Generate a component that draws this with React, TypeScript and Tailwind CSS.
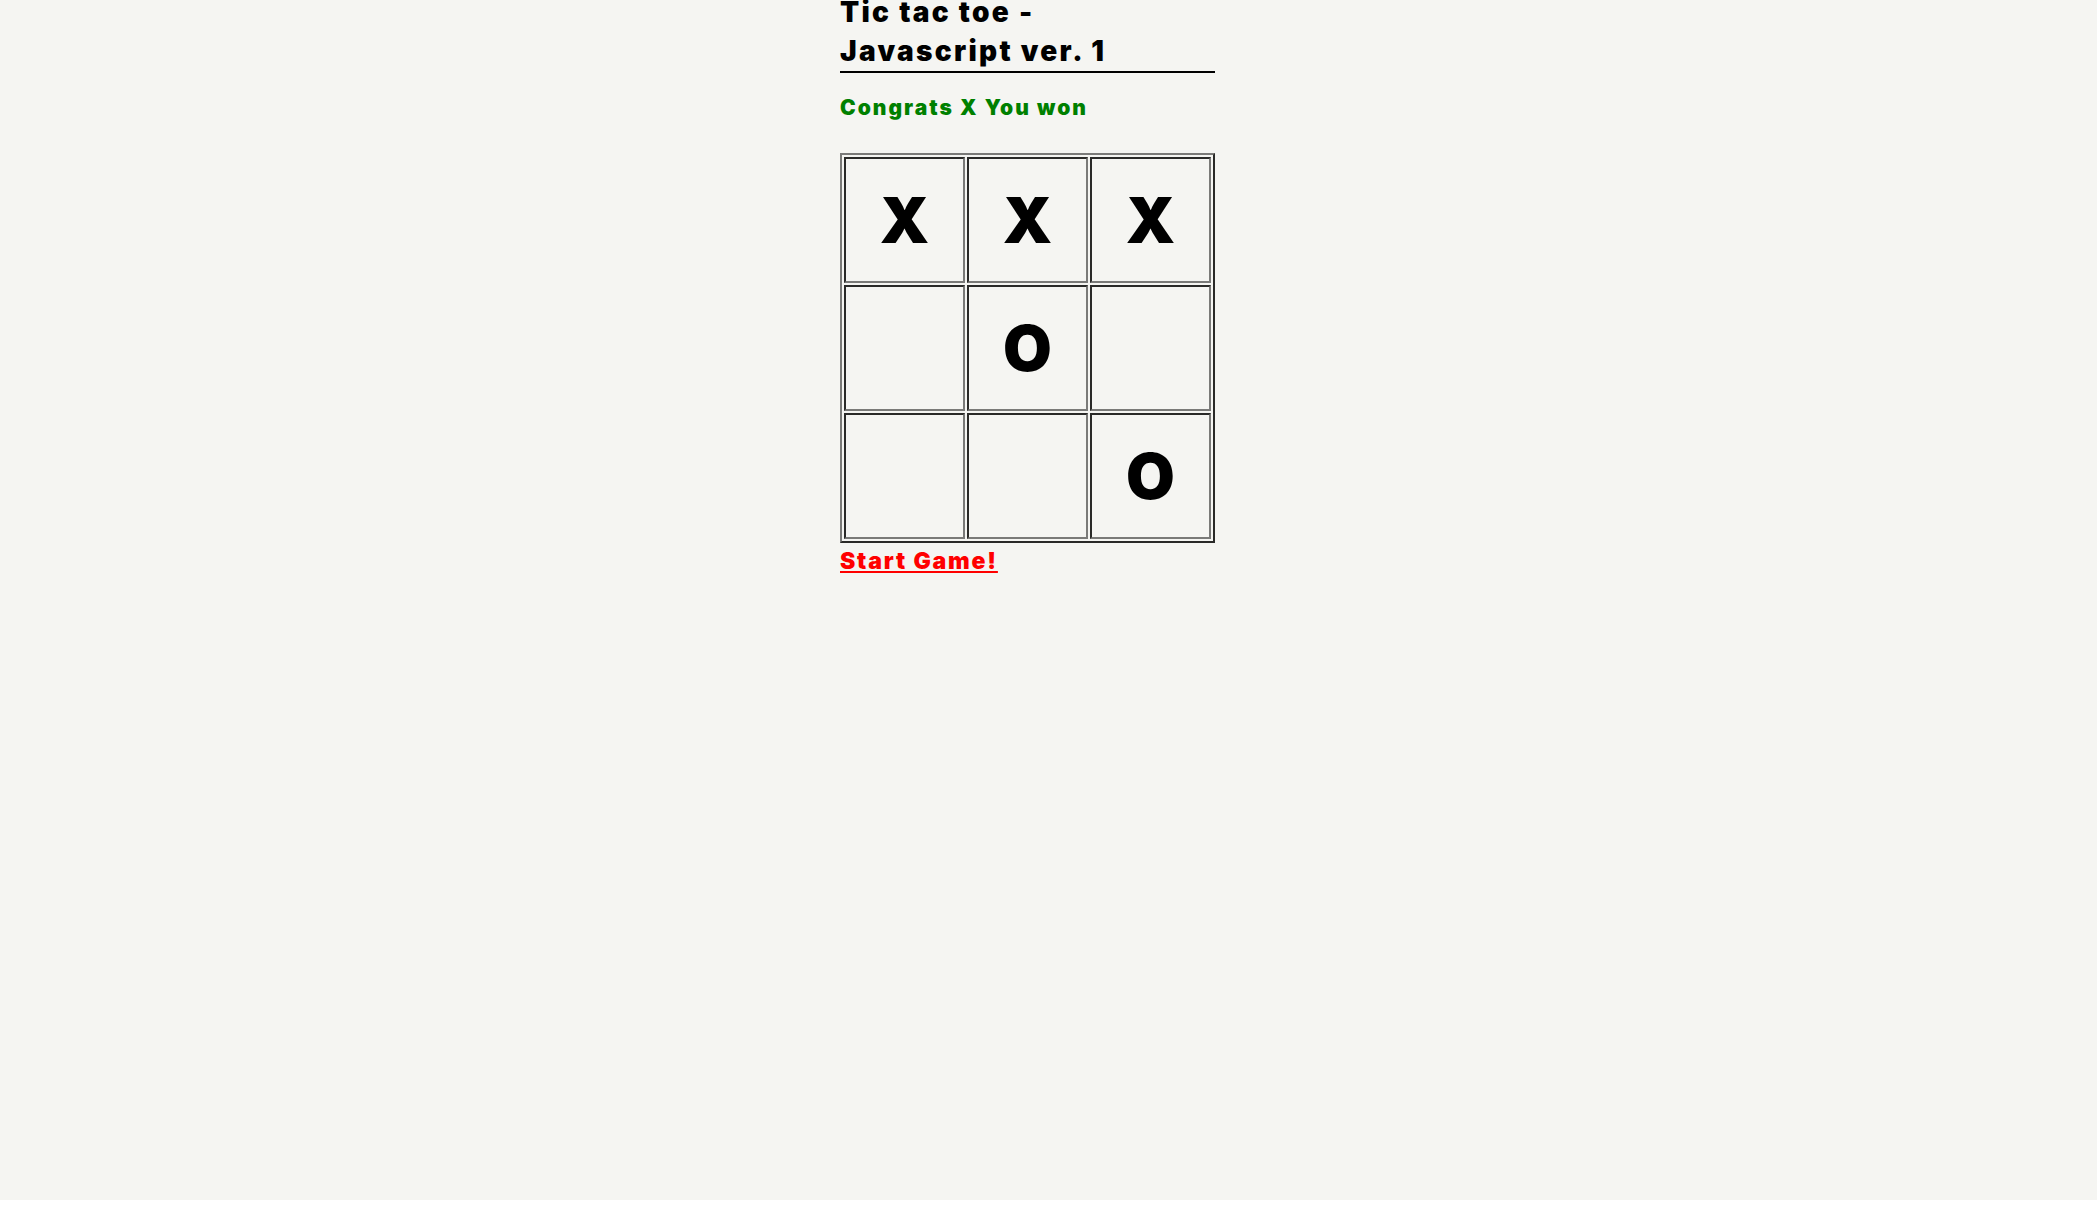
const board = ["X", "X", "X", "", "O", "", "", "", "O"];

export default function App() {
  return (
    <div className="min-h-screen bg-[#f5f5f2] text-black" style={{ fontFamily: "Inter, 'Noto Sans', sans-serif" }}>
      <div className="mx-auto w-[417px]">
        <h1 className="-mt-[7px] w-[375px] border-b-2 border-black text-[28px] leading-[39px] font-black tracking-[2.3px]">
          Tic tac toe -<br />
          Javascript ver. 1
        </h1>

        <p className="mt-[21px] text-[21px] leading-[28px] font-black tracking-[2px] text-[#008000]">Congrats X You won</p>

        {/* board */}
        <div className="mt-[31px] inline-grid grid-cols-3 gap-[2px] border-2 border-t-[#7a7a78] border-l-[#7a7a78] border-r-[#2a2a28] border-b-[#2a2a28] p-[2px]">
          {board.map((v, i) => (
            <div
              key={i}
              className="flex h-[126px] w-[121px] items-center justify-center border-2 border-t-[#2a2a28] border-l-[#2a2a28] border-r-[#7a7a78] border-b-[#7a7a78] text-[63px] font-black"
            >
              {v}
            </div>
          ))}
        </div>

        <a href="#" className="mt-[4px] block text-[23px] leading-[28px] font-black tracking-[1.8px] text-[#ff0000] underline">
          Start Game!
        </a>
      </div>
    </div>
  );
}
